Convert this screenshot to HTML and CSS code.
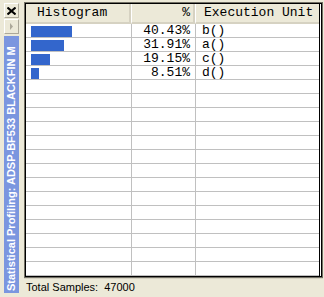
FILE: index.html
```html
<!DOCTYPE html>
<html>
<head>
<meta charset="utf-8">
<link rel="stylesheet" href="styles.css">
</head>
<body>
<div class="window">
  <div class="sidebar">
    <div class="btn close">
      <svg width="9" height="8" viewBox="0 0 9 8"><path d="M0.5 0.5 L8.5 7.5 M8.5 0.5 L0.5 7.5" stroke="#000" stroke-width="2" fill="none"/></svg>
    </div>
    <div class="btn pin">
      <svg width="5" height="7" viewBox="0 0 5 7"><path d="M1 0 L4 3.5 L1 7 Z" fill="#aca899"/></svg>
    </div>
    <div class="tab"><span class="tab-text">Statistical Profiling: ADSP-BF533 BLACKFIN M</span></div>
  </div>
  <div class="main">
    <div class="panel">
      <div class="grid">
        <div class="hdr hist">Histogram</div>
        <div class="hdr pct">%</div>
        <div class="hdr unit">Execution Unit</div>

        <div class="cell hist"><div class="bar" style="width:41px"></div></div>
        <div class="cell pct">40.43%</div>
        <div class="cell unit">b()</div>

        <div class="cell hist"><div class="bar" style="width:33px"></div></div>
        <div class="cell pct">31.91%</div>
        <div class="cell unit">a()</div>

        <div class="cell hist"><div class="bar" style="width:19px"></div></div>
        <div class="cell pct">19.15%</div>
        <div class="cell unit">c()</div>

        <div class="cell hist"><div class="bar" style="width:8px"></div></div>
        <div class="cell pct">8.51%</div>
        <div class="cell unit">d()</div>

        <div class="cell hist"></div><div class="cell pct"></div><div class="cell unit"></div>
        <div class="cell hist"></div><div class="cell pct"></div><div class="cell unit"></div>
        <div class="cell hist"></div><div class="cell pct"></div><div class="cell unit"></div>
        <div class="cell hist"></div><div class="cell pct"></div><div class="cell unit"></div>
        <div class="cell hist"></div><div class="cell pct"></div><div class="cell unit"></div>
        <div class="cell hist"></div><div class="cell pct"></div><div class="cell unit"></div>
        <div class="cell hist"></div><div class="cell pct"></div><div class="cell unit"></div>
        <div class="cell hist"></div><div class="cell pct"></div><div class="cell unit"></div>
        <div class="cell hist"></div><div class="cell pct"></div><div class="cell unit"></div>
        <div class="cell hist"></div><div class="cell pct"></div><div class="cell unit"></div>
        <div class="cell hist"></div><div class="cell pct"></div><div class="cell unit"></div>
        <div class="cell hist"></div><div class="cell pct"></div><div class="cell unit"></div>
        <div class="cell hist"></div><div class="cell pct"></div><div class="cell unit"></div>
        <div class="cell hist"></div><div class="cell pct"></div><div class="cell unit"></div>
      </div>
    </div>
    <div class="status">Total Samples:&nbsp; 47000</div>
  </div>
</div>
</body>
</html>
```
FILE: styles.css
```css
html, body {
  margin: 0;
  padding: 0;
  background: #ece9d8;
  width: 324px;
  height: 297px;
  overflow: hidden;
}
.window {
  display: flex;
  width: 324px;
  height: 297px;
}
.sidebar {
  width: 22px;
  display: flex;
  flex-direction: column;
  align-items: center;
  padding: 3px 0 4px 0;
  gap: 1px;
  box-sizing: border-box;
}
.btn {
  width: 15px;
  height: 15px;
  box-sizing: border-box;
  display: flex;
  align-items: center;
  justify-content: center;
  background: #ece9d8;
}
.close {
  border: 1px solid #fff;
  border-right-color: #aca899;
  border-bottom-color: #aca899;
}
.pin {
  border: 1px solid #fff;
  border-right-color: #aca899;
  border-bottom-color: #aca899;
}
.tab {
  flex: 1;
  width: 15px;
  margin-top: 1px;
  background: #7b96df;
  overflow: hidden;
  writing-mode: vertical-rl;
  transform: rotate(180deg);
  display: flex;
  align-items: center;
}
.tab-text {
  font-family: "Liberation Sans", Arial, sans-serif;
  font-weight: bold;
  font-size: 11px;
  color: #fff;
  white-space: nowrap;
  padding-top: 2px;
  line-height: 15px;
}
.main {
  flex: 1;
  display: flex;
  flex-direction: column;
  padding: 2px 1px 0 2px;
  min-width: 0;
}
.panel {
  height: 276px;
  box-sizing: border-box;
  border: 1px solid #716f64;
  box-shadow: inset 1px 1px 0 #000, inset -1px -1px 0 #000;
  padding: 1px 3px 1px 1px;
  background: #fff;
  overflow: hidden;
  position: relative;
}
.panel::after {
  content: "";
  position: absolute;
  right: 2px;
  top: 0;
  bottom: 0;
  width: 1px;
  background: #000;
}
.grid {
  display: grid;
  grid-template-columns: 106px 64px 123px;
  grid-auto-rows: 14px;
  grid-template-rows: 20px;
  font-family: "Liberation Mono", monospace;
  font-size: 13px;
  color: #000;
}
.hdr {
  background: #ece9d8;
  line-height: 18px;
  border-bottom: 2px solid #d6d2c2;
  border-right: 1px solid #fff;
  box-shadow: inset -2px 0 0 #d6d2c2;
  white-space: nowrap;
  overflow: hidden;
}
.hdr.hist { padding-left: 11px; }
.hdr.pct { text-align: right; padding-right: 5px; }
.hdr.unit { padding-left: 8px; border-right: none; box-shadow: none; }
.cell {
  border-bottom: 1px solid #c0c0c0;
  box-sizing: border-box;
  line-height: 13px;
  white-space: nowrap;
  overflow: hidden;
}
.cell.hist, .cell.pct {
  border-right: 1px solid #c0c0c0;
}
.cell.hist {
  padding: 2px 0 0 5px;
}
.cell.pct {
  text-align: right;
  padding-right: 5px;
}
.cell.unit {
  padding-left: 6px;
}
.bar {
  height: 11px;
  background: #3366cc;
}
.status {
  flex: 1;
  font-family: "Liberation Sans", Arial, sans-serif;
  font-size: 11px;
  line-height: 17px;
  padding-left: 2px;
  color: #000;
  border-top: 1px solid #d6d2c2;
}
```
